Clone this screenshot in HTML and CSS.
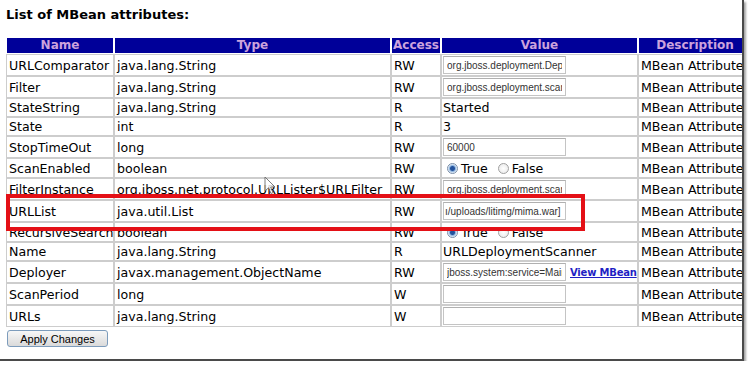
FILE: index.html
```html
<!DOCTYPE html>
<html lang="en">
<head>
    <meta charset="UTF-8">
    <title>JMX MBean View</title>
    <link rel="stylesheet" href="styles.css">
</head>
<body>
    <div class="shot">
        <div class="title">List of MBean attributes:</div>
        <table class="attrs">
            <tr>
                <th class="c-name">Name</th>
                <th class="c-type">Type</th>
                <th class="c-access">Access</th>
                <th class="c-value">Value</th>
                <th class="c-desc">Description</th>
            </tr>
            <tr>
                <td>URLComparator</td><td>java.lang.String</td><td>RW</td>
                <td class="val"><div class="field"><input type="text" value="org.jboss.deployment.DeploymentSorter"></div></td>
                <td>MBean Attribute</td>
            </tr>
            <tr>
                <td>Filter</td><td>java.lang.String</td><td>RW</td>
                <td class="val"><div class="field"><input type="text" value="org.jboss.deployment.scanner.DeploymentFilter"></div></td>
                <td>MBean Attribute</td>
            </tr>
            <tr>
                <td>StateString</td><td>java.lang.String</td><td>R</td>
                <td class="val">Started</td>
                <td>MBean Attribute</td>
            </tr>
            <tr>
                <td>State</td><td>int</td><td>R</td>
                <td class="val">3</td>
                <td>MBean Attribute</td>
            </tr>
            <tr>
                <td>StopTimeOut</td><td>long</td><td>RW</td>
                <td class="val"><div class="field"><input type="text" value="60000"></div></td>
                <td>MBean Attribute</td>
            </tr>
            <tr>
                <td>ScanEnabled</td><td>boolean</td><td>RW</td>
                <td class="val"><div class="field radios">
                    <label><input type="radio" name="scanEnabled" checked>True</label>
                    <label><input type="radio" name="scanEnabled">False</label>
                </div></td>
                <td>MBean Attribute</td>
            </tr>
            <tr>
                <td>FilterInstance</td><td>org.jboss.net.protocol.URLLister$URLFilter</td><td>RW</td>
                <td class="val"><div class="field"><input type="text" value="org.jboss.deployment.scanner.DeploymentFilter@1a2b3c"></div></td>
                <td>MBean Attribute</td>
            </tr>
            <tr>
                <td>URLList</td><td>java.util.List</td><td>RW</td>
                <td class="val"><div class="field"><input type="text" class="tail" value="ı/uploads/litimg/mima.war]"></div></td>
                <td>MBean Attribute</td>
            </tr>
            <tr>
                <td>RecursiveSearch</td><td>boolean</td><td>RW</td>
                <td class="val"><div class="field radios">
                    <label><input type="radio" name="recursive" checked>True</label>
                    <label><input type="radio" name="recursive">False</label>
                </div></td>
                <td>MBean Attribute</td>
            </tr>
            <tr>
                <td>Name</td><td>java.lang.String</td><td>R</td>
                <td class="val">URLDeploymentScanner</td>
                <td>MBean Attribute</td>
            </tr>
            <tr>
                <td>Deployer</td><td>javax.management.ObjectName</td><td>RW</td>
                <td class="val"><div class="field"><input type="text" value="jboss.system:service=MainDeployer"><a href="#" class="mbean-link">View MBean</a></div></td>
                <td>MBean Attribute</td>
            </tr>
            <tr>
                <td>ScanPeriod</td><td>long</td><td>W</td>
                <td class="val"><div class="field"><input type="text" value=""></div></td>
                <td>MBean Attribute</td>
            </tr>
            <tr>
                <td>URLs</td><td>java.lang.String</td><td>W</td>
                <td class="val"><div class="field"><input type="text" value=""></div></td>
                <td>MBean Attribute</td>
            </tr>
        </table>
        <button class="apply">Apply Changes</button>

        <!-- red highlight drawn over the URLList row -->
        <div class="mark"></div>
        <svg class="cursor" width="13" height="20" viewBox="0 0 13 20">
            <path d="M1 1 L1 15 L4.5 11.8 L7 17.5 L9 16.6 L6.6 11 L11 11 Z" fill="#fff" stroke="#666" stroke-width="1"/>
        </svg>
    </div>
</body>
</html>
```

FILE: styles.css
```css
body { margin: 0; background-color: #fff; font-family: "DejaVu Sans", Verdana, sans-serif; color: #000; }
.shot { position: relative; width: 742px; height: 359px; overflow: hidden; background-color: #fff; border-right: 2px solid #4a4a4a; border-bottom: 2px solid #4a4a4a; box-shadow: 2px 2px 2px rgba(0, 0, 0, 0.35); }
.title { font-size: 13px; font-weight: bold; line-height: 16px; padding: 7px 0 0 6px; margin-bottom: 14px; }

.attrs { table-layout: fixed; border-collapse: separate; border-spacing: 0; margin-left: 6px; width: 746px; }
.attrs th { box-sizing: border-box; background-color: #000099; color: #cca3dd; font-size: 12px; font-weight: bold; line-height: 15px; border: 1px solid #fff; padding: 0; text-align: center; white-space: nowrap; overflow: hidden; }
.attrs td { border: 1px solid #cdcdcd; padding: 0 2px; font-size: 12.6px; line-height: 17px; white-space: nowrap; overflow: hidden; vertical-align: middle; }
.c-name { width: 108px; }
.c-type { width: 277px; }
.c-access { width: 50px; }
.c-value { width: 197px; }
.c-desc { width: 114px; }
.attrs td.val { padding-left: 1px; }

.field { display: flex; align-items: center; height: 20px; }
.field input[type="text"] { box-sizing: border-box; width: 123px; height: 18px; margin: 0; padding: 0 3px; border: 1px solid #c4c4c4; border-top-color: #b0b0b0; font-family: "Liberation Sans", Arial, sans-serif; font-size: 10px; color: #333; background-color: #fff; }
.field input.tail { padding-left: 1px; }
.mbean-link { margin-left: 4px; font-size: 10px; font-weight: bold; letter-spacing: -0.2px; color: #1f1fc4; }

.radios { height: 18px; }
.radios label { display: flex; align-items: center; margin-right: 6px; }
.radios input[type="radio"] { appearance: none; -webkit-appearance: none; box-sizing: border-box; width: 11px; height: 11px; margin: 0 3px 0 4px; border: 1px solid #a0a0a0; border-radius: 50%; background: radial-gradient(circle, #fff 0, #e6e6e6 100%); }
.radios input[type="radio"]:checked { border-color: #7a8ea8; background: radial-gradient(circle, #24529c 0, #24529c 2px, #8fb5e0 3px, #eef4fb 4.5px); }

.apply { display: block; margin: 3px 0 0 7px; width: 101px; height: 17px; padding: 0; border: 1px solid #7d9cbc; border-radius: 3px; background: linear-gradient(#f7f7f7, #dadada); font-family: "Liberation Sans", Arial, sans-serif; font-size: 11px; color: #000; }

.mark { position: absolute; left: 6px; top: 194px; width: 579px; height: 37px; box-sizing: border-box; border: 4px solid #e41016; }
.cursor { position: absolute; left: 264px; top: 176px; opacity: 0.85; }
```
